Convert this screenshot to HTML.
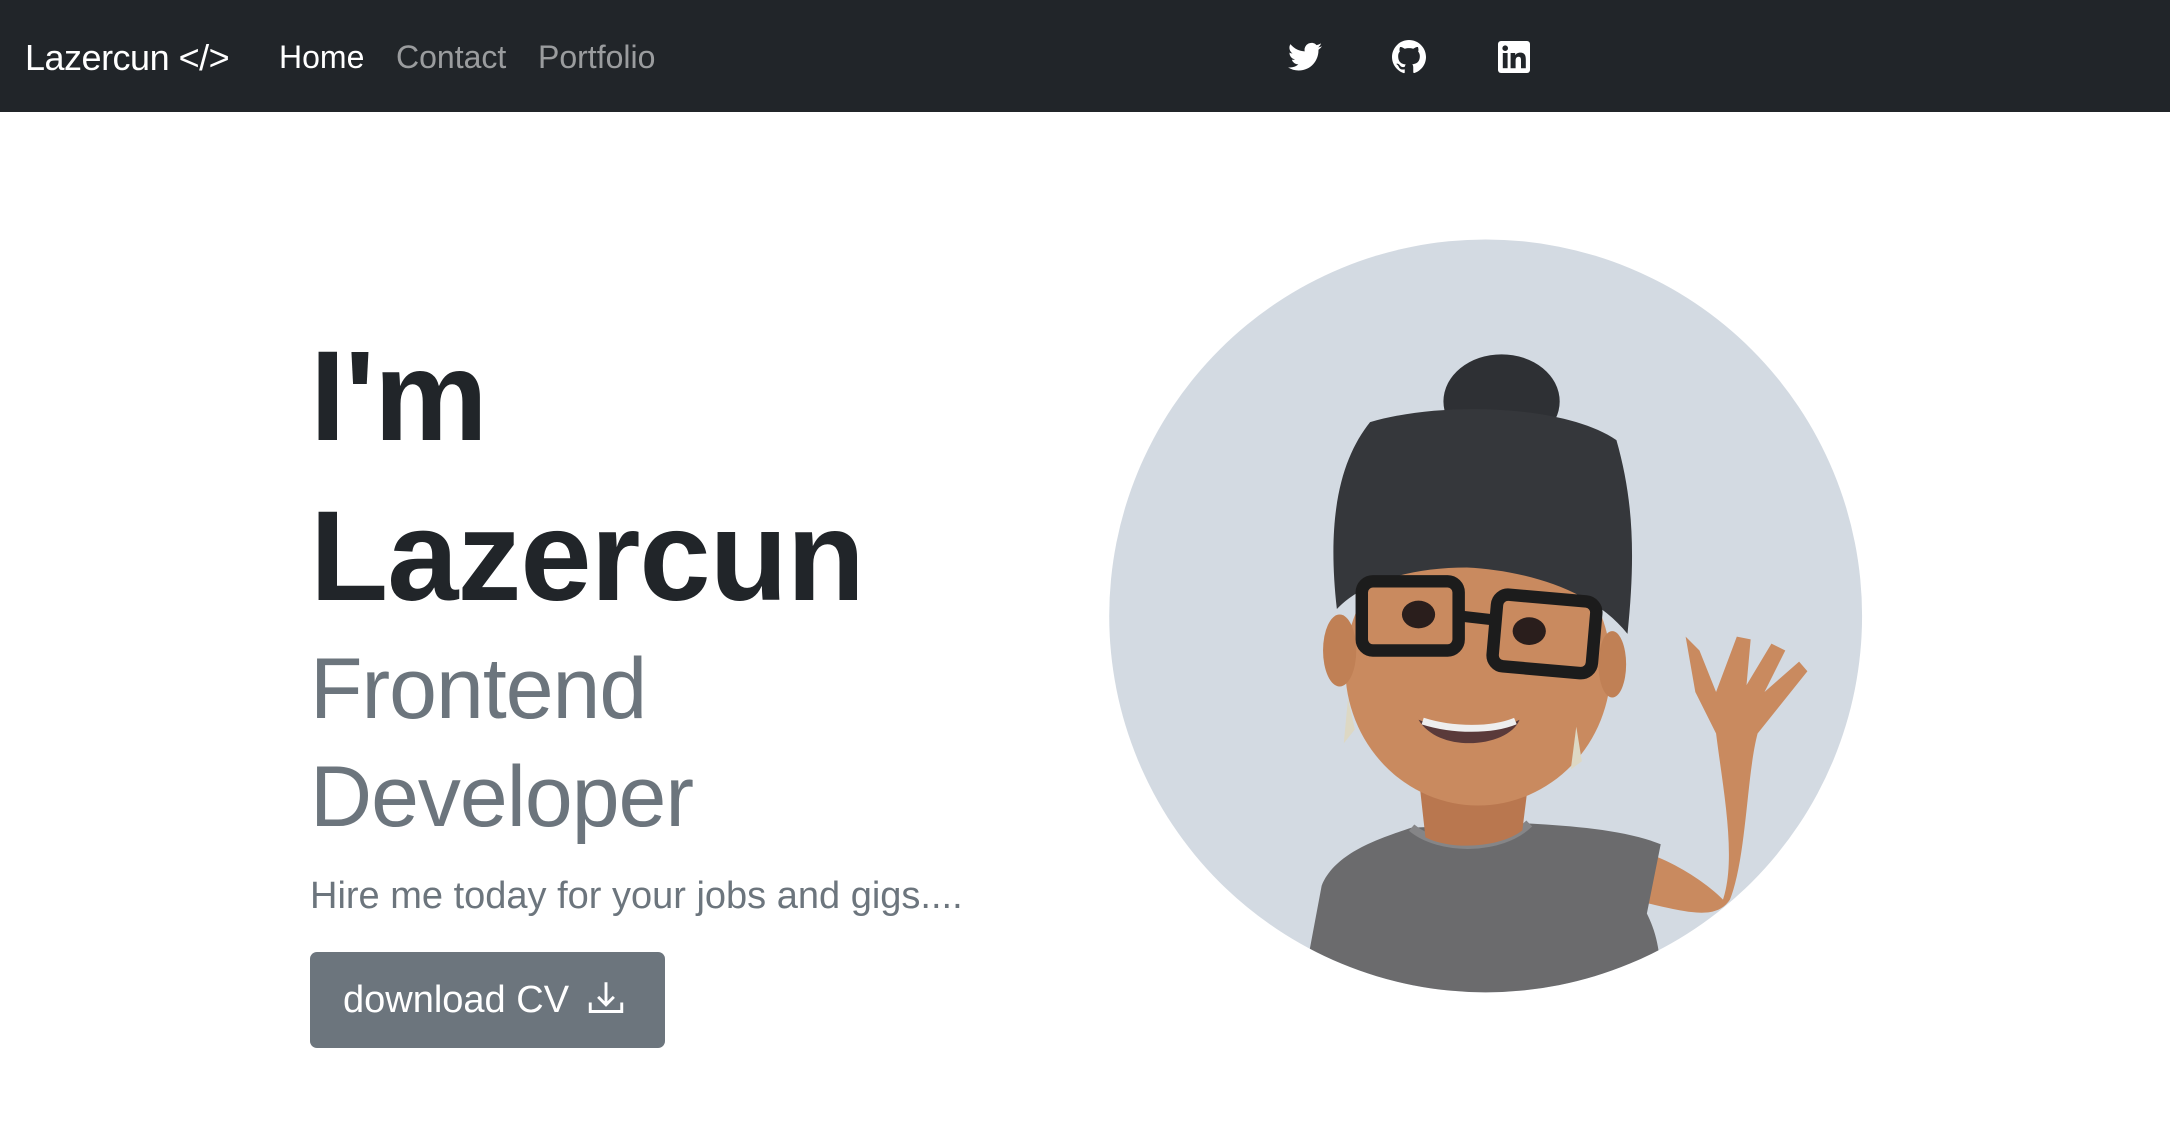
<!DOCTYPE html>
<html><head><meta charset="utf-8">
<style>
html,body{margin:0;padding:0;background:#fff;width:2170px;height:1128px;overflow:hidden;font-family:"Liberation Sans",sans-serif}
.nav{position:absolute;left:0;top:0;width:2170px;height:112px;background:#212529}
.brand{position:absolute;left:25px;top:37px;font-size:36px;color:#fff;letter-spacing:-0.5px}
.nl{position:absolute;top:39px;font-size:32px;color:rgba(255,255,255,.55)}
.t{position:absolute;left:310px;white-space:nowrap;line-height:1}
.h1{font-weight:bold;font-size:128px;color:#212529;letter-spacing:-1px}
.sub{font-size:86px;color:#6c757d;letter-spacing:-1px}
.btn{position:absolute;left:310px;top:952px;width:355px;height:96px;background:#6c757d;border-radius:7px;color:#fff;font-size:38px;line-height:96px;text-indent:33px}
</style></head><body>
<div class="nav">
  <div class="brand">Lazercun &lt;/&gt;</div>
  <div class="nl" style="left:279px;color:#fff">Home</div>
  <div class="nl" style="left:396px">Contact</div>
  <div class="nl" style="left:538px">Portfolio</div>
  <svg style="position:absolute;left:1288px;top:42px" width="34" height="30" viewBox="0 0 24 20"><path fill="#fff" d="M24 2.4a9.8 9.8 0 0 1-2.8.8A4.9 4.9 0 0 0 23.3.4a9.9 9.9 0 0 1-3.1 1.2A4.9 4.9 0 0 0 11.8 6 14 14 0 0 1 1.7.9a4.9 4.9 0 0 0 1.5 6.6A4.9 4.9 0 0 1 1 6.9v.1a4.9 4.9 0 0 0 3.9 4.8 4.9 4.9 0 0 1-2.2.1 4.9 4.9 0 0 0 4.6 3.4A9.9 9.9 0 0 1 0 17.3 14 14 0 0 0 7.5 19.5c9.1 0 14-7.5 14-14v-.6A10 10 0 0 0 24 2.4z"/></svg>
  <svg style="position:absolute;left:1392px;top:40px" width="34" height="34" viewBox="0 0 16 16"><path fill="#fff" d="M8 0C3.6 0 0 3.6 0 8c0 3.5 2.3 6.5 5.5 7.6.4.1.5-.2.5-.4v-1.4c-2.2.5-2.7-1-2.7-1-.4-.9-.9-1.2-.9-1.2-.7-.5.1-.5.1-.5.8.1 1.2.8 1.2.8.7 1.2 1.9.9 2.3.7.1-.5.3-.9.5-1.1-1.8-.2-3.6-.9-3.6-4 0-.9.3-1.6.8-2.1-.1-.2-.4-1 .1-2.1 0 0 .7-.2 2.2.8.6-.2 1.3-.3 2-.3s1.4.1 2 .3c1.5-1 2.2-.8 2.2-.8.4 1.1.2 1.9.1 2.1.5.6.8 1.3.8 2.1 0 3.1-1.9 3.7-3.6 3.9.3.3.5.8.5 1.5v2.2c0 .2.1.5.6.4C13.7 14.5 16 11.5 16 8c0-4.4-3.6-8-8-8z"/></svg>
  <svg style="position:absolute;left:1498px;top:41px" width="32" height="32" viewBox="0 0 16 16"><rect width="16" height="16" rx="1.5" fill="#fff"/><rect x="2.4" y="6" width="2.4" height="7.6" fill="#212529"/><circle cx="3.6" cy="3.6" r="1.4" fill="#212529"/><path fill="#212529" d="M6.3 6h2.3v1.1c.4-.7 1.2-1.3 2.5-1.3 2.4 0 2.8 1.6 2.8 3.6v4.2h-2.4V9.9c0-.9 0-2-1.2-2s-1.5 1-1.5 2v3.7H6.3z"/></svg>
</div>

<div class="t h1" style="top:333px">I'm</div>
<div class="t h1" style="top:493px">Lazercun</div>
<div class="t sub" style="top:646px">Frontend</div>
<div class="t sub" style="top:754px">Developer</div>
<div class="t" style="top:877px;font-size:38px;color:#6c757d">Hire me today for your jobs and gigs....</div>
<div class="btn">download CV <svg style="vertical-align:-4px;margin-left:6px" width="40" height="36" viewBox="0 0 16 16"><path fill="none" stroke="#fff" stroke-width="1.3" d="M1 10v4h14v-4M8 1v10M4.5 7.5 8 11l3.5-3.5"/></svg></div>

<svg style="position:absolute;left:0;top:0" width="2170" height="1128" viewBox="0 0 1568 815">
<defs><clipPath id="c"><circle cx="1073.5" cy="445" r="272"/></clipPath></defs>
<circle cx="1073.5" cy="445" r="272" fill="#d3dae2"/>
<g clip-path="url(#c)">
 <path d="M1170 610 C1210 620 1235 640 1245 650 C1255 620 1245 570 1240 530 L1225 500 L1218 460 L1228 470 L1240 500 L1255 460 L1265 462 L1262 495 L1280 465 L1290 470 L1275 500 L1300 478 L1306 485 L1270 530 C1262 560 1262 620 1250 650 C1240 665 1220 660 1180 650Z" fill="#c98a5f"/>
 <path d="M940 720 L955 640 C965 615 1000 605 1020 598 L1105 595 C1140 597 1175 600 1200 610 L1190 660 C1205 690 1200 720 1190 760 L930 760Z" fill="#6b6b6d"/>
 <path d="M1020 598 C1040 615 1085 615 1105 595" fill="none" stroke="#858587" stroke-width="6"/>
 <path d="M1025 560 L1030 605 C1050 615 1085 612 1100 600 L1105 560Z" fill="#b9774f"/>
 <ellipse cx="1068" cy="482" rx="96" ry="100" fill="#c98a5f"/>
 <ellipse cx="968" cy="470" rx="12" ry="26" fill="#c08055"/>
 <ellipse cx="1165" cy="480" rx="10" ry="24" fill="#c08055"/>
 <ellipse cx="1085" cy="290" rx="42" ry="34" fill="#2e3034"/>
 <path d="M966 440 C958 370 970 330 990 305 C1040 290 1130 292 1168 318 C1180 360 1182 400 1176 458 C1150 425 1100 412 1060 410 C1020 410 985 420 966 440Z" fill="#35373b"/>
 <rect x="984" y="420" width="70" height="50" rx="8" fill="none" stroke="#1c1c1c" stroke-width="9"/>
 <rect x="1080" y="432" width="72" height="52" rx="8" fill="none" stroke="#1c1c1c" stroke-width="9" transform="rotate(5 1116 458)"/>
 <path d="M1054 445 L1080 448" stroke="#1c1c1c" stroke-width="8"/>
 <ellipse cx="1025" cy="444" rx="12" ry="10" fill="#2a1e1c"/>
 <ellipse cx="1105" cy="456" rx="12" ry="10" fill="#2a1e1c"/>
 <path d="M1025 520 C1050 530 1080 530 1098 520 C1090 540 1040 545 1025 520Z" fill="#5a3a3a"/>
 <path d="M1028 521 C1050 528 1078 528 1095 521" stroke="#eee" stroke-width="5" fill="none"/>
 <path d="M974 505 l5 22 -8 10 z" fill="#ddd8c4"/>
 <path d="M1139 525 l4 25 -8 6 z" fill="#ddd8c4"/>
</g>
</svg>
</body></html>
